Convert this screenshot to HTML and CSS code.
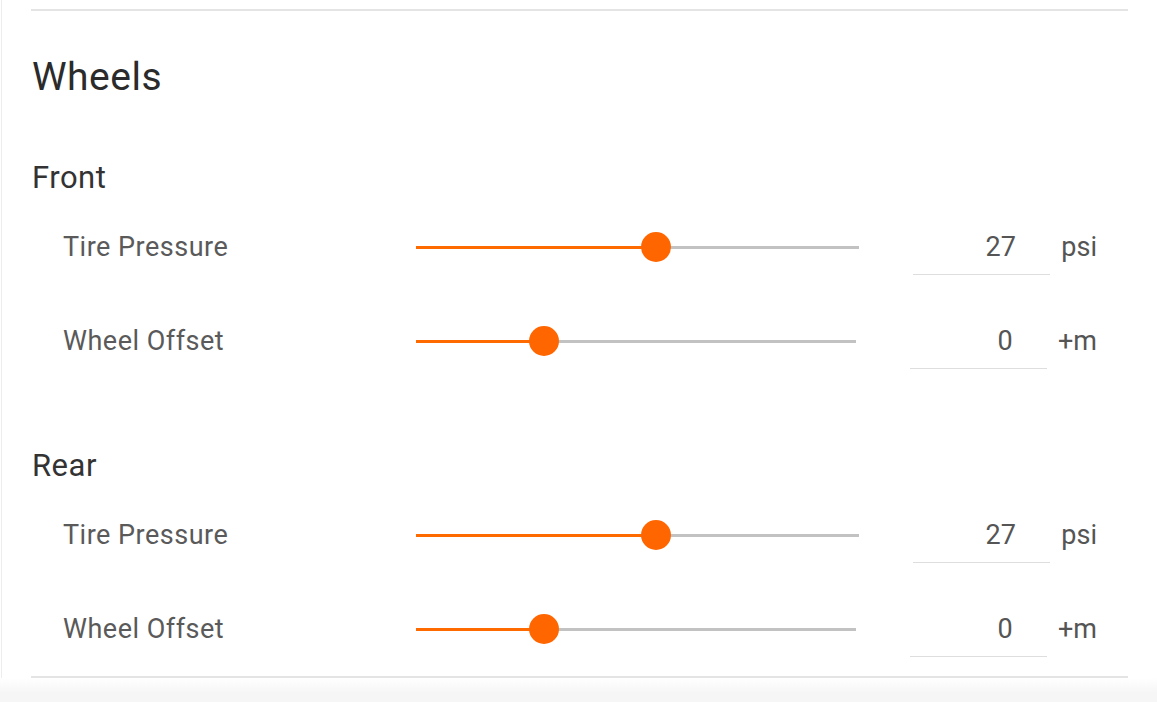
FILE: index.html
```html
<!DOCTYPE html>
<html lang="en">
<head>
<meta charset="utf-8">
<title>Wheels</title>
<link rel="stylesheet" href="styles.css">
</head>
<body>
<div class="page">
  <div class="divider"></div>
  <section class="section">
    <h2 class="title">Wheels</h2>

    <h3 class="subtitle">Front</h3>
    <div class="row">
      <div class="label">Tire Pressure</div>
      <div class="slider"><div class="fill" style="width:54.2%"></div><div class="thumb" style="left:54.2%"></div></div>
      <input class="value" type="text" value="27">
      <div class="unit">psi</div>
    </div>
    <div class="row">
      <div class="label">Wheel Offset</div>
      <div class="slider"><div class="fill" style="width:29%"></div><div class="thumb" style="left:29%"></div></div>
      <input class="value" type="text" value="0">
      <div class="unit">+m</div>
    </div>

    <h3 class="subtitle">Rear</h3>
    <div class="row">
      <div class="label">Tire Pressure</div>
      <div class="slider"><div class="fill" style="width:54.2%"></div><div class="thumb" style="left:54.2%"></div></div>
      <input class="value" type="text" value="27">
      <div class="unit">psi</div>
    </div>
    <div class="row">
      <div class="label">Wheel Offset</div>
      <div class="slider"><div class="fill" style="width:29%"></div><div class="thumb" style="left:29%"></div></div>
      <input class="value" type="text" value="0">
      <div class="unit">+m</div>
    </div>
  </section>
  <div class="divider"></div>
</div>
<div class="footer"></div>
</body>
</html>
```

FILE: styles.css
```css
html, body {
  margin: 0;
  padding: 0;
  background: #ffffff;
}

body {
  font-family: Roboto, "Liberation Sans", Arial, sans-serif;
  color: rgba(0, 0, 0, 0.8);
}

.page {
  margin-left: 1px;
  border-left: 1px solid #ededed;
  padding: 9px 29px 0 29px;
}

.divider {
  height: 2px;
  background: #e4e4e4;
}

.section {
  padding: 0 31px 0 32px;
}

.title {
  margin: 43px 0 0 -31px;
  font-size: 39px;
  line-height: 46px;
  font-weight: 400;
  letter-spacing: 0.5px;
  color: #2b2b2b;
}

.subtitle {
  margin: 60px 0 0 -31px;
  font-size: 31px;
  line-height: 36px;
  font-weight: 400;
  letter-spacing: 0.5px;
  color: #333333;
}

.row {
  display: flex;
  align-items: center;
  height: 94px;
}

.subtitle + .row {
  margin-top: 4px;
}

.label {
  width: 353px;
  flex: none;
  font-size: 27px;
  letter-spacing: 0.5px;
  color: #5a5a5a;
}

.slider {
  position: relative;
  flex: 1;
  height: 3px;
  background: #c2c2c2;
  margin-right: 54px;
}

.fill {
  height: 100%;
  background: #ff6a00;
}

.thumb {
  position: absolute;
  top: 50%;
  width: 30px;
  height: 30px;
  border-radius: 50%;
  background: #ff6600;
  transform: translate(-50%, -50%);
}

.value {
  flex: none;
  box-sizing: border-box;
  width: 137px;
  height: 56px;
  margin: 0 11px 0 0;
  padding: 0 34px 0 0;
  border: none;
  border-bottom: 1px solid #dedede;
  background: transparent;
  font-family: Roboto, "Liberation Sans", Arial, sans-serif;
  font-size: 27px;
  letter-spacing: 0.3px;
  color: #555555;
  text-align: right;
  outline: none;
}

.unit {
  flex: none;
  font-size: 27px;
  color: #555555;
}

.footer {
  height: 24px;
  background: linear-gradient(#ffffff, #f6f6f6 60%);
}
```
